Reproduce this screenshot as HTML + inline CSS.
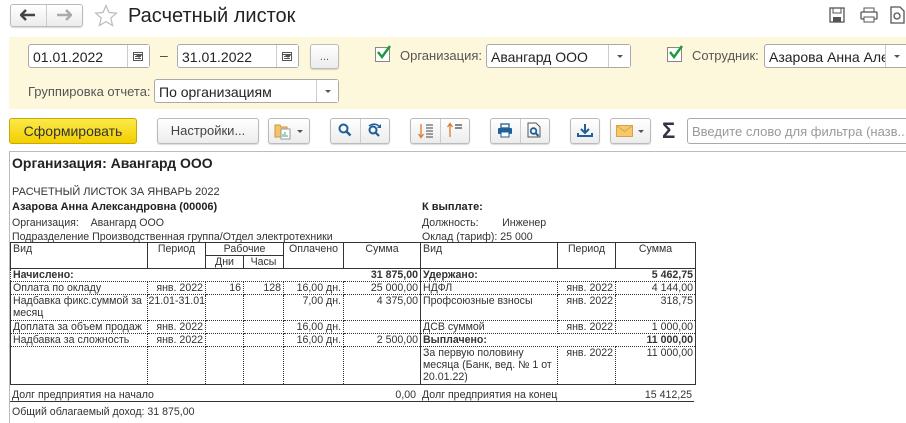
<!DOCTYPE html>
<html><head><meta charset="utf-8">
<style>
*{box-sizing:border-box;margin:0;padding:0}
body{width:906px;height:423px;overflow:hidden;background:#fff;font-family:"Liberation Sans",Arial,sans-serif;color:#333;position:relative}
.a{position:absolute}
.btn{position:absolute;border:1px solid #bbb;border-radius:3px;background:linear-gradient(#fff,#ececec);box-shadow:0 1px 1px rgba(0,0,0,.15)}
.fld{position:absolute;border:1px solid #aaa;border-radius:3px;background:#fff;font-size:14px;color:#222;padding:4px 0 0 4px;height:24px;white-space:nowrap}
.dd{position:absolute;right:0;top:0;bottom:0;width:22px;border-left:1px solid #ccc;background:#fff}
.dd:after{content:"";position:absolute;left:8px;top:10px;border:3px solid transparent;border-top:3px solid #555}
.lbl{position:absolute;font-size:13px;color:#555}
.chk{position:absolute;width:15px;height:15px;border:1px solid #888;background:#fff}
.sep{position:absolute;top:0;bottom:0;width:1px;background:#ccc}
table{position:absolute;border-collapse:collapse;table-layout:fixed;font-size:10.6px;color:#333}
td{padding:0 2px;vertical-align:top;line-height:12px;overflow:hidden;white-space:nowrap}
.r{text-align:right}.c{text-align:center}.b{font-weight:bold}
.h td{border:1px solid #333}
.d td{border-left:1px dotted #333;border-right:1px dotted #333;border-bottom:1px dotted #333}
.t{font-size:10.6px;position:absolute;white-space:nowrap}
</style></head><body>

<!-- title bar -->
<div class="btn" style="left:10px;top:4px;width:73px;height:23px"></div>
<div class="a" style="left:46px;top:5px;width:1px;height:21px;background:#ccc"></div>
<svg class="a" style="left:20px;top:9px" width="16" height="12"><path d="M1 6h14M6 1L1 6l5 5" stroke="#444" stroke-width="2.5" fill="none"/></svg>
<svg class="a" style="left:56px;top:9px" width="16" height="12"><path d="M1 6h14M10 1l5 5-5 5" stroke="#aaa" stroke-width="2.5" fill="none"/></svg>
<svg class="a" style="left:94px;top:4px" width="24" height="23"><path d="M12 1.5l3 7 7.5.6-5.7 5 1.8 7.4L12 17.6 5.4 21.5l1.8-7.4-5.7-5 7.5-.6z" fill="none" stroke="#bbb" stroke-width="1.2"/></svg>
<div class="a" style="left:128px;top:5px;font-size:20px;color:#222">Расчетный листок</div>
<svg class="a" style="left:829px;top:7px" width="16" height="16"><rect x="1" y="1" width="14" height="14" fill="none" stroke="#555" stroke-width="1.3"/><rect x="4" y="1" width="8" height="5" fill="none" stroke="#555"/><rect x="4" y="10" width="8" height="5" fill="#555"/></svg>
<svg class="a" style="left:860px;top:7px" width="18" height="16"><rect x="4" y="1" width="10" height="4" fill="none" stroke="#555"/><rect x="1" y="5" width="16" height="7" rx="1" fill="none" stroke="#555" stroke-width="1.3"/><rect x="4" y="10" width="10" height="5" fill="#fff" stroke="#555"/></svg>
<svg class="a" style="left:890px;top:6px" width="16" height="18"><path d="M1 1h9l4 4v12H1z" fill="none" stroke="#555" stroke-width="1.3"/><circle cx="7" cy="10" r="3" fill="none" stroke="#555" stroke-width="1.3"/></svg>

<!-- yellow panel -->
<div class="a" style="left:9px;top:37px;width:897px;height:72px;background:#fdf8dc"></div>
<div class="fld" style="left:28px;top:44px;width:122px">01.01.2022<div class="dd"></div></div>
<svg class="a" style="left:133px;top:51px" width="10" height="10"><rect x="0.5" y="1.5" width="9" height="8" fill="none" stroke="#555"/><path d="M0 3.5h10M2 5.5h6M2 7.5h6" stroke="#555"/></svg>
<div class="a" style="left:160px;top:47px;font-size:14px;color:#444">–</div>
<div class="fld" style="left:177px;top:44px;width:122px">31.01.2022<div class="dd"></div></div>
<svg class="a" style="left:282px;top:51px" width="10" height="10"><rect x="0.5" y="1.5" width="9" height="8" fill="none" stroke="#555"/><path d="M0 3.5h10M2 5.5h6M2 7.5h6" stroke="#555"/></svg>
<div class="btn" style="left:310px;top:44px;width:29px;height:25px;font-size:11px;text-align:center;line-height:24px;color:#555">...</div>
<div class="chk" style="left:375px;top:47px"></div>
<svg class="a" style="left:376px;top:44px" width="16" height="16"><path d="M2 8l4 5 8-11" stroke="#1a9a3a" stroke-width="2.4" fill="none"/></svg>
<div class="lbl" style="left:400px;top:48px">Организация:</div>
<div class="fld" style="left:486px;top:44px;width:145px">Авангард ООО<div class="dd"></div></div>
<div class="chk" style="left:667px;top:47px"></div>
<svg class="a" style="left:668px;top:44px" width="16" height="16"><path d="M2 8l4 5 8-11" stroke="#1a9a3a" stroke-width="2.4" fill="none"/></svg>
<div class="lbl" style="left:692px;top:48px">Сотрудник:</div>
<div class="fld" style="left:764px;top:44px;width:146px;overflow:hidden"><span style="display:inline-block;width:118px;overflow:hidden">Азарова Анна Алек</span><div class="dd" style="right:2px"></div></div>
<div class="lbl" style="left:28px;top:84px">Группировка отчета:</div>
<div class="fld" style="left:154px;top:79px;width:185px">По организациям<div class="dd"></div></div>

<!-- toolbar -->
<div class="a" style="left:9px;top:118px;width:128px;height:26px;border:1px solid #c9a800;border-radius:3px;background:linear-gradient(#fce94a,#f2cf00);font-size:14px;color:#333;text-align:center;line-height:24px">Сформировать</div>
<div class="btn" style="left:157px;top:118px;width:102px;height:26px;font-size:13px;text-align:center;line-height:24px;color:#444">Настройки...</div>
<div class="btn" style="left:268px;top:118px;width:42px;height:26px"></div>
<svg class="a" style="left:274px;top:122px" width="18" height="18"><path d="M1 3h5l1 2h6v10H1z" fill="#f3c46a" stroke="#c89a3a"/><rect x="7" y="7" width="9" height="10" fill="#fff" stroke="#999"/><path d="M9 15v-3M11 15v-5M13 15v-2" stroke="#3a7"/></svg>
<div class="a" style="left:297px;top:130px;border:3px solid transparent;border-top:3px solid #555"></div>
<div class="btn" style="left:330px;top:118px;width:60px;height:26px"><div class="sep" style="left:29px"></div></div>
<svg class="a" style="left:338px;top:123px" width="14" height="14"><circle cx="5.5" cy="5.5" r="4" fill="none" stroke="#1f5f9a" stroke-width="2"/><path d="M8.5 8.5l4 4" stroke="#1f5f9a" stroke-width="2.4"/></svg>
<svg class="a" style="left:367px;top:122px" width="16" height="15"><circle cx="6" cy="8" r="3.5" fill="none" stroke="#1f5f9a" stroke-width="2"/><path d="M8.5 10.5l3.5 3.5" stroke="#1f5f9a" stroke-width="2.2"/><path d="M2 4q6-4 11 1" fill="none" stroke="#1f5f9a" stroke-width="1.6"/><path d="M14 2v4h-4" fill="#1f5f9a"/></svg>
<div class="btn" style="left:410px;top:118px;width:60px;height:26px"><div class="sep" style="left:29px"></div></div>
<svg class="a" style="left:418px;top:123px" width="16" height="16"><path d="M3 1v13M0.5 11l2.5 3.5 2.5-3.5" stroke="#e07a2a" stroke-width="1.3" fill="none"/><path d="M8 2h7M8 5h7M8 8h7M8 11h7M8 14h7" stroke="#444"/></svg>
<svg class="a" style="left:447px;top:122px" width="16" height="16"><path d="M3 15V2M0.5 5L3 1.5 5.5 5" stroke="#e07a2a" stroke-width="1.3" fill="none"/><path d="M8 3h7M8 6h7" stroke="#444" stroke-width="1.3"/></svg>
<div class="btn" style="left:490px;top:118px;width:60px;height:26px"><div class="sep" style="left:29px"></div></div>
<svg class="a" style="left:497px;top:123px" width="16" height="15"><rect x="4" y="1" width="8" height="4" fill="none" stroke="#1f5f9a" stroke-width="1.3"/><rect x="1" y="5" width="14" height="6" rx="1" fill="#1f5f9a"/><rect x="4" y="9" width="8" height="5" fill="#fff" stroke="#1f5f9a"/></svg>
<svg class="a" style="left:527px;top:122px" width="14" height="16"><path d="M1 1h8l4 4v10H1z" fill="none" stroke="#555"/><circle cx="6.5" cy="9" r="2.8" fill="none" stroke="#1f5f9a" stroke-width="1.8"/><path d="M8.5 11l3 3" stroke="#1f5f9a" stroke-width="2"/></svg>
<div class="btn" style="left:570px;top:118px;width:30px;height:26px"></div>
<svg class="a" style="left:577px;top:123px" width="16" height="15"><path d="M8 1v9M4 6l4 4 4-4" stroke="#1f5f9a" stroke-width="2" fill="none"/><path d="M1 10v3h14v-3" stroke="#1f5f9a" stroke-width="2" fill="none"/></svg>
<div class="btn" style="left:610px;top:118px;width:41px;height:26px"></div>
<svg class="a" style="left:616px;top:125px" width="17" height="12"><rect x="0.5" y="0.5" width="16" height="11" fill="#f5c96a" stroke="#d9a24a"/><path d="M0.5 0.5l8 6 8-6" fill="none" stroke="#d9a24a"/></svg>
<div class="a" style="left:638px;top:130px;border:3px solid transparent;border-top:3px solid #555"></div>
<div class="a" style="left:662px;top:119px;font-size:22px;line-height:24px;font-weight:bold;color:#334">Σ</div>
<div class="a" style="left:687px;top:118px;width:230px;height:26px;border:1px solid #aaa;border-radius:3px;font-size:13px;color:#999;padding:5px 0 0 4px;white-space:nowrap;overflow:hidden">Введите слово для фильтра (назв...</div>

<!-- report -->
<div class="a" style="left:9px;top:151px;width:897px;height:1px;background:#bbb"></div>
<div class="a" style="left:9px;top:151px;width:1px;height:272px;background:#bbb"></div>
<div class="a b" style="left:12px;top:155px;font-size:14px;color:#222">Организация: Авангард ООО</div>
<div class="t" style="left:12px;top:186px;font-size:11px">РАСЧЕТНЫЙ ЛИСТОК ЗА ЯНВАРЬ 2022</div>
<div class="t b" style="left:12px;top:201px;font-size:11px;color:#222">Азарова Анна Александровна (00006)</div>
<div class="t" style="left:12px;top:217px">Организация:&nbsp;&nbsp;&nbsp; Авангард ООО</div>
<div class="t" style="left:12px;top:231px">Подразделение Производственная группа/Отдел электротехники</div>
<div class="t b" style="left:422px;top:201px;font-size:11px;color:#222">К выплате:</div>
<div class="t" style="left:422px;top:217px">Должность:&nbsp;&nbsp;&nbsp;&nbsp;&nbsp;&nbsp;&nbsp; Инженер</div>
<div class="t" style="left:422px;top:231px">Оклад (тариф): 25 000</div>

<table style="left:10px;top:242px;width:685px">
<colgroup><col style="width:137px"><col style="width:58px"><col style="width:38px"><col style="width:40px"><col style="width:60px"><col style="width:77px"><col style="width:137px"><col style="width:58px"><col style="width:80px"></colgroup>
<tr class="h" style="height:13px"><td rowspan="2">Вид</td><td rowspan="2" class="c">Период</td><td colspan="2" class="c">Рабочие</td><td rowspan="2" class="c">Оплачено</td><td rowspan="2" class="c">Сумма</td><td rowspan="2">Вид</td><td rowspan="2" class="c">Период</td><td rowspan="2" class="c">Сумма</td></tr>
<tr class="h" style="height:12px"><td class="c">Дни</td><td class="c">Часы</td></tr>
<tr class="d" style="height:13px"><td colspan="5" class="b" style="border-right:none">Начислено:</td><td class="r b" style="border-left:none;border-right:1px solid #333">31 875,00</td><td colspan="2" class="b" style="border-right:none">Удержано:</td><td class="r b" style="border-left:none;border-right:1px solid #333">5 462,75</td></tr>
<tr class="d" style="height:13px"><td style="border-left:1px solid #333">Оплата по окладу</td><td class="r">янв. 2022</td><td class="r">16</td><td class="r">128</td><td class="r">16,00 дн.</td><td class="r" style="border-right:1px solid #333">25 000,00</td><td>НДФЛ</td><td class="r">янв. 2022</td><td class="r" style="border-right:1px solid #333">4 144,00</td></tr>
<tr class="d" style="height:26px"><td style="border-left:1px solid #333;white-space:normal">Надбавка фикс.суммой за месяц</td><td class="r" style="padding:0">21.01-31.01</td><td></td><td></td><td class="r">7,00 дн.</td><td class="r" style="border-right:1px solid #333">4 375,00</td><td>Профсоюзные взносы</td><td class="r">янв. 2022</td><td class="r" style="border-right:1px solid #333">318,75</td></tr>
<tr class="d" style="height:13px"><td style="border-left:1px solid #333">Доплата за объем продаж</td><td class="r">янв. 2022</td><td></td><td></td><td class="r">16,00 дн.</td><td class="r" style="border-right:1px solid #333"></td><td>ДСВ суммой</td><td class="r">янв. 2022</td><td class="r" style="border-right:1px solid #333">1 000,00</td></tr>
<tr class="d" style="height:13px"><td style="border-left:1px solid #333">Надбавка за сложность</td><td class="r">янв. 2022</td><td></td><td></td><td class="r">16,00 дн.</td><td class="r" style="border-right:1px solid #333">2 500,00</td><td colspan="2" class="b" style="border-right:none">Выплачено:</td><td class="r b" style="border-left:none;border-right:1px solid #333">11 000,00</td></tr>
<tr class="d" style="height:38px"><td style="border-left:1px solid #333;border-bottom:1px solid #333"></td><td style="border-bottom:1px solid #333"></td><td style="border-bottom:1px solid #333"></td><td style="border-bottom:1px solid #333"></td><td style="border-bottom:1px solid #333"></td><td style="border-right:1px solid #333;border-bottom:1px solid #333"></td><td style="border-bottom:1px solid #333">За первую половину<br>месяца (Банк, вед. № 1 от<br>20.01.22)</td><td class="r" style="border-bottom:1px solid #333">янв. 2022</td><td class="r" style="border-right:1px solid #333;border-bottom:1px solid #333">11 000,00</td></tr>
</table>
<div class="t" style="left:12px;top:389px">Долг предприятия на начало</div>
<div class="t" style="left:380px;top:389px;width:36px;text-align:right">0,00</div>
<div class="a" style="left:10px;top:401px;width:410px;height:1px;background:#333"></div>
<div class="t" style="left:422px;top:389px">Долг предприятия на конец</div>
<div class="t" style="left:620px;top:389px;width:72px;text-align:right">15 412,25</div>
<div class="a" style="left:420px;top:401px;width:274px;height:1px;background:#333"></div>
<div class="t" style="left:12px;top:406px">Общий облагаемый доход: 31 875,00</div>
</body></html>
